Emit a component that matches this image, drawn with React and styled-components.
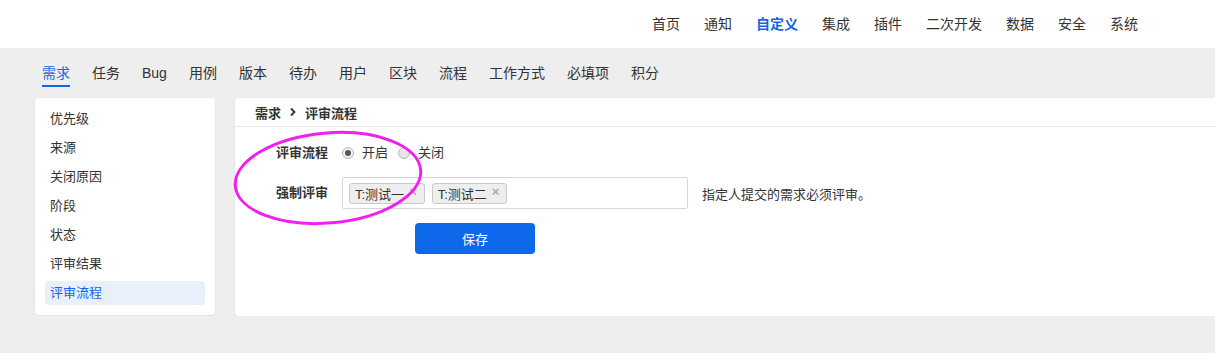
import styled, { createGlobalStyle } from 'styled-components';

const GlobalStyle = createGlobalStyle`
  html, body { margin: 0; padding: 0; }
  body {
    background: #eeeeee;
    font-family: "Liberation Sans", "Noto Sans CJK SC", sans-serif;
    color: #333;
    overflow: hidden;
  }
`;

const topNav = ['首页', '通知', '自定义', '集成', '插件', '二次开发', '数据', '安全', '系统'];
const tabs = ['需求', '任务', 'Bug', '用例', '版本', '待办', '用户', '区块', '流程', '工作方式', '必填项', '积分'];
const sideItems = ['优先级', '来源', '关闭原因', '阶段', '状态', '评审结果', '评审流程'];
const reviewers = ['T:测试一', 'T:测试二'];

function App() {
  return (
    <>
      <GlobalStyle />
      <Header>
        <TopNav>
          {topNav.map((item) => (
            <TopNavItem key={item} active={item === '自定义'}>{item}</TopNavItem>
          ))}
        </TopNav>
      </Header>

      <TabBar>
        {tabs.map((tab) => (
          <Tab key={tab} active={tab === '需求'}>{tab}</Tab>
        ))}
      </TabBar>

      <Content>
        <SideCard>
          {sideItems.map((item) => (
            <SideItem key={item} active={item === '评审流程'}>{item}</SideItem>
          ))}
        </SideCard>

        <MainCard>
          <CardHeader>
            需求
            <svg width="8" height="10" viewBox="0 0 8 10">
              <path d="M2 1.5 L5.5 5 L2 8.5" fill="none" stroke="#333" strokeWidth="1.8" />
            </svg>
            评审流程
          </CardHeader>

          <Form>
            {/* hand-drawn highlight over the first two rows */}
            <Annotation viewBox="0 0 220 100">
              <ellipse cx="110" cy="50" rx="93" ry="45" fill="none" stroke="#f01ef0" strokeWidth="3"
                transform="rotate(-5 110 50)" />
            </Annotation>

            <Row>
              <Label>评审流程</Label>
              <RadioGroup>
                <RadioOption>
                  <RadioDot checked />
                  开启
                </RadioOption>
                <RadioOption>
                  <RadioDot />
                  关闭
                </RadioOption>
              </RadioGroup>
            </Row>

            <Row>
              <Label>强制评审</Label>
              <TagInput>
                {reviewers.map((name) => (
                  <Tag key={name}>
                    {name}
                    <TagClose>×</TagClose>
                  </Tag>
                ))}
              </TagInput>
              <Hint>指定人提交的需求必须评审。</Hint>
            </Row>

            <SaveButton>保存</SaveButton>
          </Form>
        </MainCard>
      </Content>
    </>
  );
}

// --- styled-components ---

const Header = styled.header`
  height: 48px;
  background: #fff;
  display: flex; justify-content: flex-end; align-items: center;
  padding-right: 77px;
`;

const TopNav = styled.nav`
  display: flex; gap: 24px;
`;

const TopNavItem = styled.span`
  font-size: 14px;
  line-height: 20px;
  color: ${(p) => (p.active ? '#1565e6' : '#333')};
  font-weight: ${(p) => (p.active ? 'bold' : 'normal')};
  cursor: pointer;
`;

const TabBar = styled.div`
  height: 50px;
  display: flex; gap: 22px;
  padding-left: 42px;
  box-sizing: border-box;
`;

const Tab = styled.div`
  font-size: 14px;
  line-height: 20px;
  padding-top: 15px;
  padding-bottom: 2px;
  height: 20px;
  color: ${(p) => (p.active ? '#1565e6' : '#333')};
  border-bottom: 2px solid ${(p) => (p.active ? '#1565e6' : 'transparent')};
  cursor: pointer;
`;

const Content = styled.div`
  display: flex; gap: 20px;
  padding-left: 35px;
  align-items: flex-start;
`;

const SideCard = styled.aside`
  width: 180px;
  box-sizing: border-box;
  background: #fff;
  border-radius: 4px;
  box-shadow: 0 1px 3px rgba(0, 0, 0, 0.08);
  padding: 9px 10px 10px;
  display: flex; flex-direction: column; gap: 5px;
`;

const SideItem = styled.div`
  height: 24px;
  line-height: 24px;
  padding: 0 5px;
  font-size: 13px;
  border-radius: 4px;
  color: ${(p) => (p.active ? '#1565e6' : '#333')};
  background: ${(p) => (p.active ? '#e8f0fc' : 'transparent')};
  cursor: pointer;
`;

const MainCard = styled.section`
  flex: 1;
  height: 218px;
  background: #fff;
  border-radius: 4px 0 0 4px;
  box-shadow: 0 1px 3px rgba(0, 0, 0, 0.08);
`;

const CardHeader = styled.div`
  height: 29px;
  box-sizing: border-box;
  border-bottom: 1px solid #e6e6e6;
  padding-left: 20px;
  display: flex; align-items: center; gap: 8px;
  font-size: 13px;
  font-weight: bold;
  color: #333;
`;

const Form = styled.div`
  position: relative;
  padding: 16px 0 0 41px;
  display: flex; flex-direction: column; gap: 14px;
`;

const Annotation = styled.svg`
  position: absolute;
  left: -17px;
  top: 1px;
  width: 220px; height: 100px;
  pointer-events: none;
`;

const Row = styled.div`
  display: flex; align-items: center;
`;

const Label = styled.div`
  width: 66px;
  font-size: 13px;
  font-weight: bold;
  line-height: 20px;
  color: #333;
`;

const RadioGroup = styled.div`
  display: flex; gap: 10px;
`;

const RadioOption = styled.label`
  display: flex; align-items: center; gap: 8px;
  font-size: 13px;
  line-height: 20px;
  color: #333;
`;

const RadioDot = styled.span`
  width: 12px; height: 12px;
  box-sizing: border-box;
  border-radius: 50%;
  border: 1px solid #b8b8b8;
  background: ${(p) => (p.checked ? '#f0f0f0' : '#e6e6e6')};
  display: flex; align-items: center; justify-content: center;
  &::after {
    content: '';
    width: 6px; height: 6px; border-radius: 50%;
    background: ${(p) => (p.checked ? '#555' : 'transparent')};
  }
`;

const TagInput = styled.div`
  width: 346px; height: 32px;
  box-sizing: border-box;
  border: 1px solid #d6d6d6;
  border-radius: 2px;
  padding: 0 6px;
  display: flex; align-items: center; gap: 7px;
`;

const Tag = styled.span`
  height: 21px;
  box-sizing: border-box;
  border: 1px solid #c9c9c9;
  border-radius: 3px;
  background: #eeeeee;
  padding: 0 7px 0 5px;
  display: flex; align-items: center; gap: 5px;
  font-size: 13px;
  color: #333;
`;

const TagClose = styled.span`
  font-size: 13px;
  font-weight: bold;
  color: #aaa;
  margin-top: -3px;
`;

const Hint = styled.span`
  margin-left: 14px;
  font-size: 13px;
  color: #333;
`;

const SaveButton = styled.button`
  margin-left: 139px;
  width: 120px; height: 31px;
  border: none;
  border-radius: 4px;
  background: #0d68ea;
  color: #fff;
  font-family: inherit;
  font-size: 13px;
  cursor: pointer;
`;

export default App;
